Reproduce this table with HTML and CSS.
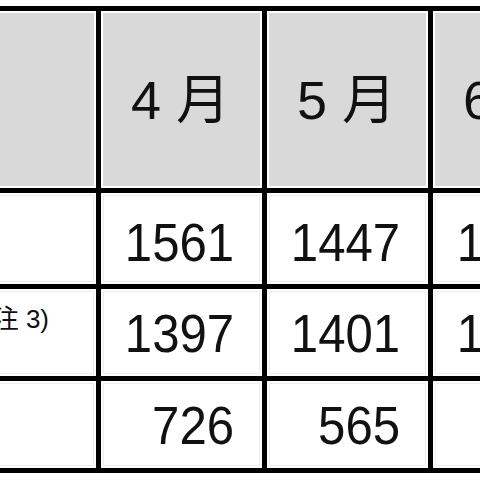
FILE: index.html
```html
<!DOCTYPE html>
<html lang="ja">
<head>
<meta charset="utf-8">
<title>月別台数</title>
<link rel="stylesheet" href="styles.css">
</head>
<body>
<div class="crop">
  <table class="stats">
    <colgroup>
      <col class="c-label">
      <col class="c-month">
      <col class="c-month">
      <col class="c-month">
    </colgroup>
    <tr class="head">
      <th class="label"></th>
      <th>4 月</th>
      <th>5 月</th>
      <th>6 月</th>
    </tr>
    <tr class="r1">
      <td class="label"><span class="label-text">生産台数</span></td>
      <td><span class="num">1561</span></td>
      <td><span class="num">1447</span></td>
      <td><span class="num">1502</span></td>
    </tr>
    <tr class="r2">
      <td class="label"><span class="label-text">国内出荷台数</span><span class="note">(注 3)</span></td>
      <td><span class="num">1397</span></td>
      <td><span class="num">1401</span></td>
      <td><span class="num">1433</span></td>
    </tr>
    <tr class="r3">
      <td class="label"><span class="label-text">在庫台数</span></td>
      <td><span class="num">726</span></td>
      <td><span class="num">565</span></td>
      <td><span class="num">634</span></td>
    </tr>
  </table>
</div>
</body>
</html>
```

FILE: styles.css
```css
html, body {
  margin: 0;
  padding: 0;
  background: #ffffff;
}

.crop {
  width: 480px;
  height: 480px;
  overflow: hidden;
  padding-top: 6px;
  box-sizing: border-box;
}

.stats {
  table-layout: fixed;
  border-collapse: separate;
  border-spacing: 0;
  margin-left: -204px;
  width: 798px;
  border-top: 5px solid #000;
  border-left: 5px solid #000;
  font-family: "Liberation Sans", "Noto Sans CJK JP", sans-serif;
  color: #111;
}

.c-label { width: 300px; }
.c-month { width: 166px; }

.stats th,
.stats td {
  border-right: 5px solid #000;
  border-bottom: 5px solid #000;
  padding: 0;
  line-height: 1;
  vertical-align: middle;
  white-space: nowrap;
  overflow: hidden;
}

.stats th {
  background: #d9d9d9;
  box-shadow: inset 0 0 0 2px #ffffff;
  font-weight: normal;
  font-size: 54px;
  text-align: center;
  padding-right: 2px;
  height: 177px;
}

.stats td {
  font-size: 54px;
  text-align: right;
  padding-right: 28px;
  box-shadow: inset 0 0 0 2px #ffffff, inset 0 0 0 3px #ececec;
}

.num {
  display: inline-block;
  transform: scaleX(0.91);
  transform-origin: right center;
}

.r1 td { height: 84px; padding-top: 7px; }
.r2 td, .r3 td { height: 87px; }

.stats td.label {
  text-align: left;
  padding-left: 3px;
  padding-right: 0;
}

.label-text {
  font-size: 30px;
}

.note {
  font-size: 26px;
  vertical-align: 24px;
}
```
